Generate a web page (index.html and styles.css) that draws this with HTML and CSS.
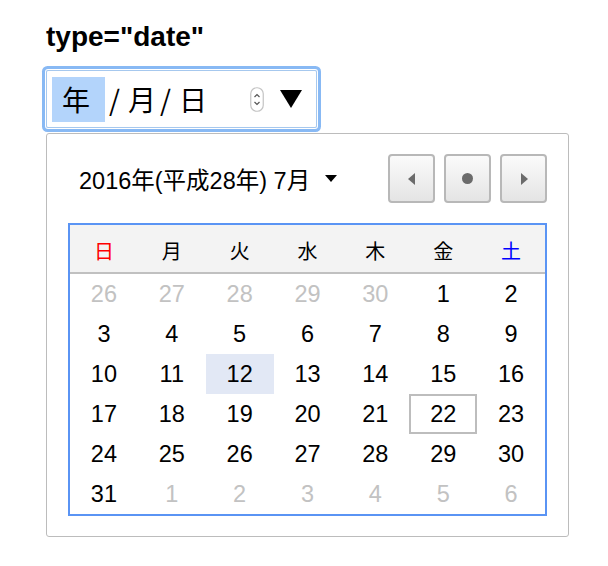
FILE: index.html
```html
<!DOCTYPE html>
<html lang="ja">
<head>
<meta charset="utf-8">
<title>type=date</title>
<link rel="stylesheet" href="styles.css">
</head>
<body>
<div class="page">
  <div class="label">type="date"</div>
  <div class="date-input">
    <span class="seg sel">年</span><span class="sep">/</span><span class="seg">月</span><span class="sep">/</span><span class="seg">日</span>
    <span class="spacer"></span>
    <svg class="spin" width="14" height="25" viewBox="0 0 14 25">
      <rect x="0.75" y="0.75" width="12.5" height="23.5" rx="6" fill="#fff" stroke="#c4c4c4" stroke-width="1.2"/>
      <path d="M4.5 10 L7 7.5 L9.5 10" fill="none" stroke="#555" stroke-width="1.2"/>
      <path d="M4.5 15 L7 17.5 L9.5 15" fill="none" stroke="#555" stroke-width="1.2"/>
    </svg>
    <svg class="drop" width="22" height="18" viewBox="0 0 22 18"><polygon points="0,0 22,0 11,18" fill="#000"/></svg>
  </div>
  <div class="popup">
    <div class="head">
      <div class="month">2016年(平成28年) 7月<svg class="caret" width="12" height="7" viewBox="0 0 12 7"><polygon points="0,0 12,0 6,7" fill="#000"/></svg></div>
      <div class="nav">
        <div class="btn"><svg width="8" height="12" viewBox="0 0 8 12"><polygon points="7,0 7,12 0,6" fill="#6b6b6b"/></svg></div>
        <div class="btn"><svg width="11" height="11" viewBox="0 0 11 11"><circle cx="5.5" cy="5.5" r="5.5" fill="#6b6b6b"/></svg></div>
        <div class="btn"><svg width="8" height="12" viewBox="0 0 8 12"><polygon points="1,0 1,12 8,6" fill="#6b6b6b"/></svg></div>
      </div>
    </div>
    <div class="cal">
      <div class="wd sun">日</div><div class="wd">月</div><div class="wd">火</div><div class="wd">水</div><div class="wd">木</div><div class="wd">金</div><div class="wd sat">土</div>
      <div class="d out">26</div><div class="d out">27</div><div class="d out">28</div><div class="d out">29</div><div class="d out">30</div><div class="d">1</div><div class="d">2</div>
      <div class="d">3</div><div class="d">4</div><div class="d">5</div><div class="d">6</div><div class="d">7</div><div class="d">8</div><div class="d">9</div>
      <div class="d">10</div><div class="d">11</div><div class="d today">12</div><div class="d">13</div><div class="d">14</div><div class="d">15</div><div class="d">16</div>
      <div class="d">17</div><div class="d">18</div><div class="d">19</div><div class="d">20</div><div class="d">21</div><div class="d focus">22</div><div class="d">23</div>
      <div class="d">24</div><div class="d">25</div><div class="d">26</div><div class="d">27</div><div class="d">28</div><div class="d">29</div><div class="d">30</div>
      <div class="d">31</div><div class="d out">1</div><div class="d out">2</div><div class="d out">3</div><div class="d out">4</div><div class="d out">5</div><div class="d out">6</div>
    </div>
  </div>
</div>
</body>
</html>
```
FILE: styles.css
```css
body {
  margin: 0;
  background: #fff;
  color: #000;
  font-family: "Liberation Sans", "Noto Sans CJK JP", sans-serif;
}
.page {
  padding: 22px 0 0 46px;
}
.label {
  font-weight: bold;
  font-size: 28px;
  line-height: 30px;
  height: 30px;
}
.date-input {
  margin-top: 18px;
  width: 271px;
  height: 58px;
  box-sizing: border-box;
  border: 1px solid #a6c8ee;
  border-radius: 2px;
  box-shadow: 0 0 0 1px #fff, 0 0 0 4px #88b9f4;
  display: flex;
  align-items: center;
  padding: 0 14px 0 5px;
  font-family: "Noto Sans CJK JP", sans-serif;
  font-size: 28px;
}
.seg {
  line-height: 45px;
}
.sel {
  background: #b3d4fb;
  padding: 0 15px 0 10px;
}
.sep {
  margin: 0 8px 0 4px;
  font-family: "Noto Sans CJK JP", sans-serif;
  font-size: 28px;
  line-height: 45px;
}
.spacer {
  flex: 1;
}
.spin {
  display: block;
  margin-right: 16px;
}
.drop {
  display: block;
}
.popup {
  margin-top: 5px;
  width: 523px;
  box-sizing: border-box;
  border: 1px solid #bcbcbc;
  border-radius: 3px;
  padding: 20px 21px;
}
.head {
  height: 49px;
  display: flex;
  align-items: center;
  justify-content: space-between;
  margin-bottom: 20px;
}
.month {
  padding-left: 11px;
  font-size: 23.5px;
  display: flex;
  align-items: center;
}
.caret {
  margin-left: 15px;
  display: block;
}
.nav {
  display: flex;
  gap: 9px;
}
.btn {
  width: 47px;
  height: 49px;
  box-sizing: border-box;
  border: 2px solid #b8b8b8;
  border-radius: 4px;
  background: linear-gradient(#fbfbfb, #e4e4e4);
  display: flex;
  align-items: center;
  justify-content: center;
}
.btn svg {
  display: block;
}
.cal {
  border: 2px solid #5a94f4;
  display: grid;
  grid-template-columns: repeat(7, 1fr);
}
.wd {
  background: #f3f3f3;
  border-bottom: 2px solid #c0c0c0;
  display: flex;
  align-items: center;
  justify-content: center;
  padding-top: 4px;
  box-sizing: border-box;
  height: 49px;
  font-size: 20px;
}
.sun { color: #f00; }
.sat { color: #00f; }
.d {
  height: 40px;
  display: flex;
  align-items: center;
  justify-content: center;
  font-size: 23.5px;
}
.out { color: #c2c2c2; }
.today { background: #e2e8f5; }
.focus {
  border: 2px solid #bdbdbd;
  box-sizing: border-box;
}
```
